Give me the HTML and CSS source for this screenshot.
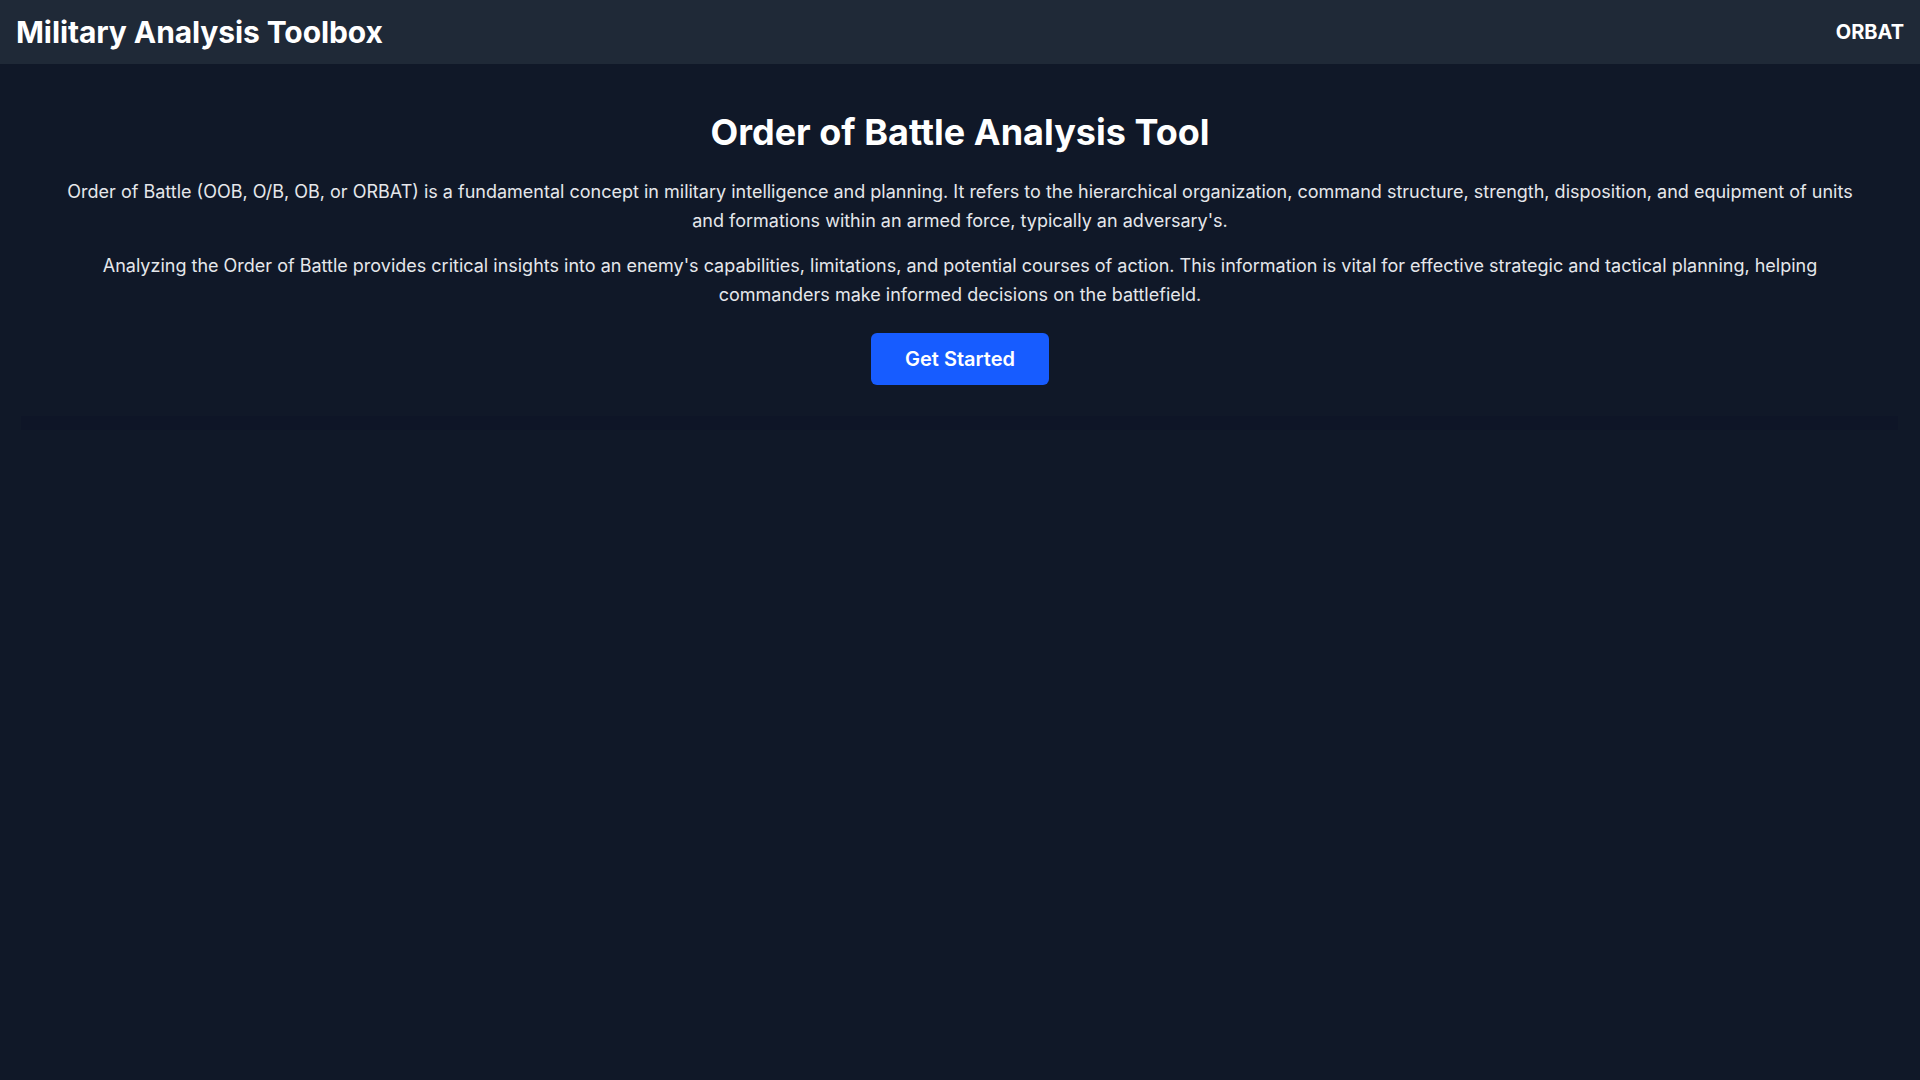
FILE: index.html
```html
<!DOCTYPE html>
<html lang="en">
<head>
<meta charset="utf-8">
<title>Military Analysis Toolbox</title>
<link rel="stylesheet" href="styles.css">
</head>
<body>
<header class="topbar">
  <div class="brand">Military Analysis Toolbox</div>
  <nav class="nav"><a class="nav-link" href="#">ORBAT</a></nav>
</header>
<main class="main">
  <section class="hero">
    <h1 class="hero-title">Order of Battle Analysis Tool</h1>
    <p class="hero-text">Order of Battle (OOB, O/B, OB, or ORBAT) is a fundamental concept in military intelligence and planning. It refers to the hierarchical organization, command structure, strength, disposition, and equipment of units and formations within an armed force, typically an adversary's.</p>
    <p class="hero-text">Analyzing the Order of Battle provides critical insights into an enemy's capabilities, limitations, and potential courses of action. This information is vital for effective strategic and tactical planning, helping commanders make informed decisions on the battlefield.</p>
    <button class="btn-primary">Get Started</button>
  </section>
  <section class="workspace"></section>
</main>
</body>
</html>
```

FILE: styles.css
```css
* { box-sizing: border-box; }
html, body {
  margin: 0;
  padding: 0;
  height: 100%;
}
body {
  background: #101828;
  color: #f3f4f6;
  font-family: Inter, "Noto Sans", sans-serif;
}
.topbar {
  height: 64px;
  background: #1f2937;
  display: flex;
  align-items: center;
  justify-content: space-between;
  padding: 0 16px 0 16px;
}
.brand {
  font-size: 30px;
  font-weight: 700;
  color: #ffffff;
  letter-spacing: -0.1px;
}
.nav-link {
  color: #ffffff;
  font-size: 20px;
  font-weight: 700;
  text-decoration: none;
}
.main {
  display: flex;
  flex-direction: column;
}
.hero {
  display: flex;
  flex-direction: column;
  align-items: center;
  text-align: center;
  padding: 48px 58px 31px;
}
.hero-title {
  margin: 0 0 25px;
  font-size: 36px;
  line-height: 40px;
  font-weight: 700;
  color: #ffffff;
}
.hero-text {
  margin: 0 0 16px;
  font-size: 18px;
  line-height: 29px;
  color: #e5e7eb;
}
.hero-text + .btn-primary { margin-top: 8px; }
.btn-primary {
  font-family: inherit;
  background: #175cff;
  color: #ffffff;
  border: none;
  border-radius: 6px;
  font-size: 20px;
  line-height: 28px;
  font-weight: 600;
  padding: 12px 32px;
  width: 178px;
  cursor: pointer;
}
.workspace {
  margin: 0 22px 0 21px;
  height: 14px;
  background: #0e1527;
}
```
